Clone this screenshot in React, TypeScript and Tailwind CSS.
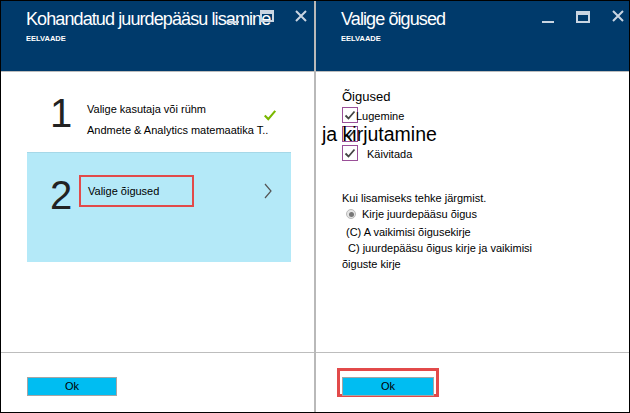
import React from 'react';

const font = { fontFamily: '"Liberation Sans", Arial, sans-serif' };

const Minimize = () => (
  <svg width="12" height="12" viewBox="0 0 12 12">
    <rect x="0" y="9" width="12" height="2" fill="#c9d5e2" />
  </svg>
);

const Maximize = () => (
  <svg width="14" height="12" viewBox="0 0 14 12">
    <rect x="1" y="1" width="12" height="10" fill="none" stroke="#c9d5e2" strokeWidth="2" />
    <rect x="1" y="1" width="12" height="3" fill="#c9d5e2" />
  </svg>
);

const Close = () => (
  <svg width="12" height="12" viewBox="0 0 12 12">
    <path d="M1 1 L11 11 M11 1 L1 11" stroke="#c9d5e2" strokeWidth="2" />
  </svg>
);

const Check = ({ color = '#444', size = 12 }: { color?: string; size?: number }) => (
  <svg width={size} height={size} viewBox="0 0 12 12">
    <path d="M1.5 6.5 L4.5 9.5 L10.5 2.5" fill="none" stroke={color} strokeWidth="1.8" />
  </svg>
);

const Box = () => (
  <div className="w-4 h-4 border border-[#9a4f98] flex items-center justify-center bg-white">
    <Check />
  </div>
);

const Header = ({ title, children }: { title: string; children: React.ReactNode }) => (
  <div className="relative h-[70px] bg-[#003a6b] pl-[25px] pt-[5px]">
    <div className="text-[18px] leading-[26px] tracking-[-0.9px] text-white whitespace-nowrap">{title}</div>
    <div className="text-[7.5px] font-bold text-white mt-[1px]">EELVAADE</div>
    {children}
  </div>
);

export default function App() {
  return (
    <div className="w-[630px] h-[413px] border border-black flex bg-white" style={font}>
      <div className="w-[315px] flex flex-col border-r-2 border-[#b9b9b9]">
        <Header title="Kohandatud juurdepääsu lisamine">
          <div className="absolute left-[226px] top-[11px]"><Minimize /></div>
          <div className="absolute left-[259px] top-[9px]"><Maximize /></div>
          <div className="absolute left-[294px] top-[9px]"><Close /></div>
        </Header>
        <div className="flex-1 border-t border-[#bdbdbd] px-[26px] pr-[23px]">
          <div className="h-[80px] flex pt-[22px] relative">
            <div className="w-[60px] pl-[23px] text-[40px] leading-[38px] text-[#222]">1</div>
            <div className="text-[11px] text-black leading-[14px]">
              <div className="pt-[8px]">Valige kasutaja või rühm</div>
              <div className="pt-[7px]">Andmete &amp; Analytics matemaatika T..</div>
            </div>
            <div className="absolute left-[236px] top-[36px]"><Check color="#7ab800" size={14} /></div>
          </div>
          <div className="h-[110px] bg-[#b4e9f8] border-t border-[#a6d8e8] flex items-start pt-[22px] relative">
            <div className="w-[52px] pl-[23px] pt-[1px] text-[40px] leading-[38px] text-[#222]">2</div>
            <div className="w-[115px] h-[32px] border-2 border-[#e24a4a] flex items-center pl-[7px] text-[11px] text-black">
              Valige õigused
            </div>
            <svg className="absolute left-[236px] top-[30px]" width="10" height="16" viewBox="0 0 10 16">
              <path d="M2 1 L8 8 L2 15" fill="none" stroke="#555" strokeWidth="1.2" />
            </svg>
          </div>
        </div>
        <div className="h-[60px] border-t border-[#bdbdbd] pl-[26px] pt-[20px]">
          <button className="w-[90px] h-[19px] bg-[#00bdf2] border border-[#a5a5a5] text-[11px] text-black">Ok</button>
        </div>
      </div>
      <div className="flex-1 flex flex-col">
        <Header title="Valige õigused">
          <div className="absolute left-[226px] top-[11px]"><Minimize /></div>
          <div className="absolute left-[260px] top-[10px]"><Maximize /></div>
          <div className="absolute left-[296px] top-[9px]"><Close /></div>
        </Header>
        <div className="flex-1 border-t border-[#bdbdbd] pl-[26px] pt-[17px] text-black">
          <div className="text-[13px] leading-[16px]">Õigused</div>
          <div className="mt-[2px] flex flex-col gap-[3px]">
            <div className="flex items-end h-4">
              <Box />
              <span className="text-[11px] leading-[13px] -ml-[2px]">Lugemine</span>
            </div>
            <div className="relative h-4">
              <Box />
              <span className="absolute -left-[20px] -top-[3px] text-[19.5px] leading-[22px] whitespace-nowrap">ja kirjutamine</span>
            </div>
            <div className="flex items-end h-4">
              <Box />
              <span className="text-[11px] leading-[13px] ml-[9px]">Käivitada</span>
            </div>
          </div>
          <div className="mt-[29px] text-[11px] leading-[16px]">
            <div>Kui lisamiseks tehke järgmist.</div>
            <div className="flex items-center pl-[4px]">
              <span className="w-[10px] h-[10px] rounded-full border border-[#bbb] bg-[#e6e6e6] flex items-center justify-center mr-[6px]">
                <span className="w-[5px] h-[5px] rounded-full bg-[#777]" />
              </span>
              Kirje juurdepääsu õigus
            </div>
            <div className="pl-[4px] mt-[2px]">(C) A vaikimisi õigusekirje</div>
            <div className="pl-[6px]">C) juurdepääsu õigus kirje ja vaikimisi</div>
            <div>õiguste kirje</div>
          </div>
        </div>
        <div className="h-[60px] border-t border-[#bdbdbd] pl-[21px] pt-[15px]">
          <div className="w-[102px] h-[29px] border-[3px] border-[#e24a4a] p-[2px]">
            <button className="w-full h-full bg-[#00bdf2] border border-[#a5a5a5] text-[11px] text-black">Ok</button>
          </div>
        </div>
      </div>
    </div>
  );
}
